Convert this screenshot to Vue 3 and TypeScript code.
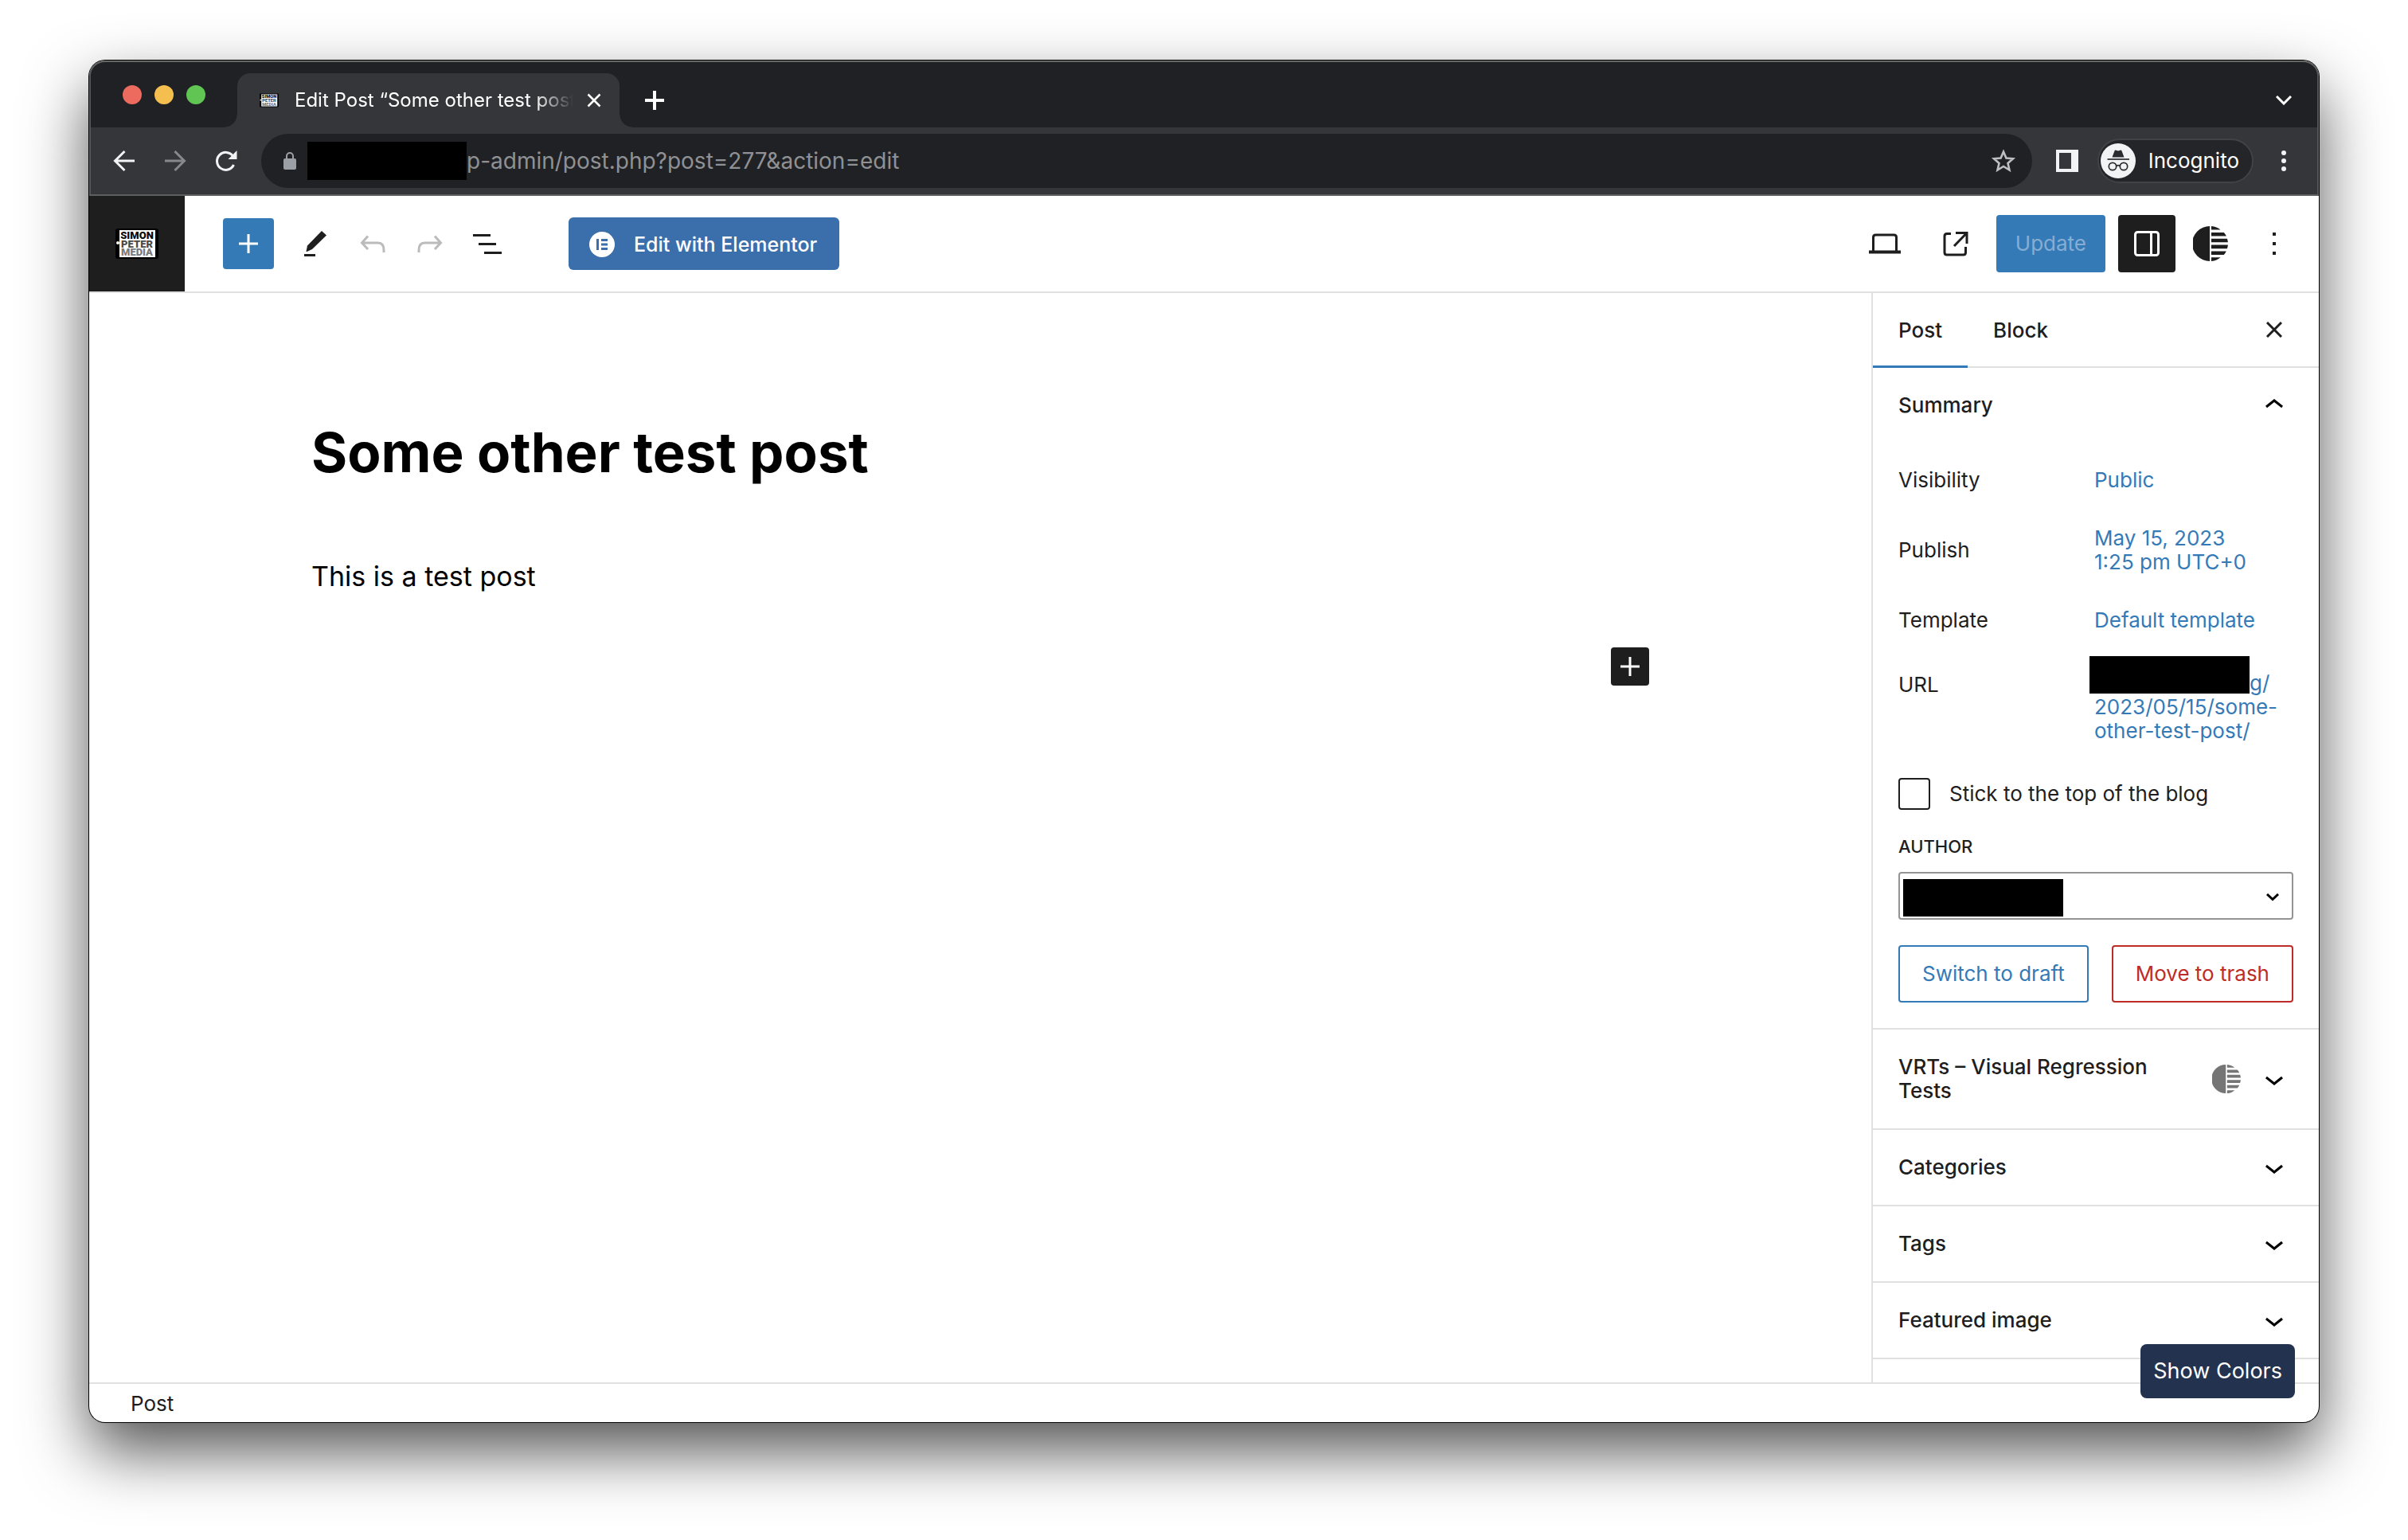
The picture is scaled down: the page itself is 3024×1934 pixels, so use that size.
<script setup lang="ts">
import { h, ref } from 'vue'

interface CollapsedPanel {
  title: string
  hasIcon: boolean
}

const address = ref('p-admin/post.php?post=277&action=edit')
const sticky = ref(false)
const author = ref('')

const panels: CollapsedPanel[] = [
  { title: 'VRTs – Visual Regression Tests', hasIcon: true },
  { title: 'Categories', hasIcon: false },
  { title: 'Tags', hasIcon: false },
  { title: 'Featured image', hasIcon: false },
]

const logoLines = [
  { text: 'SIMON', y: 13, fill: '#0a0a0a' },
  { text: 'PETER', y: 24, fill: '#4a4a4a' },
  { text: 'MEDIA', y: 34, fill: '#7a7a7a' },
]

// Site logo: a tablet with the three-line wordmark, used in the tab and in the header
const SiteLogo = (props: { width: number; height: number }) =>
  h('svg', { width: props.width, height: props.height, viewBox: '0 0 54 38' }, [
    h('rect', { width: 54, height: 38, rx: 3, fill: '#000' }),
    h('rect', { x: 5, y: 2, width: 45, height: 34, fill: '#fff' }),
    h('circle', { cx: 3, cy: 18, r: 2, fill: '#fff' }),
    ...logoLines.map((line) =>
      h(
        'text',
        {
          x: 27,
          y: line.y,
          fill: line.fill,
          'font-family': 'Roboto, sans-serif',
          'font-weight': 900,
          'font-size': 13,
          'text-anchor': 'middle',
        },
        line.text,
      ),
    ),
  ])
SiteLogo.props = ['width', 'height']
</script>

<template>
  <div class="desktop">
    <!-- Shared glyphs -->
    <svg class="defs" width="0" height="0" aria-hidden="true">
      <symbol id="vrts" viewBox="0 0 44 44">
        <path d="M21 0v44A22 22 0 0 1 21 0z" />
        <path d="M23 0q7 .5 11.500 4.600H23zM23 8h15.800q2 2 3 4.500H23zM23 15.700h19.900q.8 2.200 1 4.600H23zM23 23.600h20.900q-.2 2.400-1 4.600H23zM23 31.400h18.800q-1.200 2.500-3 4.600H23zM23 39.300h11.600Q30 43.500 23 44z" />
      </symbol>
      <symbol id="chevron-down" viewBox="0 0 24 24">
        <path d="M17.500 11.600L12 16l-5.500-4.400.9-1.200L12 14l4.500-3.600 1 1.200z" />
      </symbol>
    </svg>

    <div class="window">
      <header class="chrome">
        <div class="tabstrip">
          <div class="lights">
            <button class="light red" aria-label="Close window"></button>
            <button class="light yellow" aria-label="Minimize window"></button>
            <button class="light green" aria-label="Zoom window"></button>
          </div>
          <div class="tab">
            <SiteLogo :width="24" :height="18" />
            <span class="tab-title">Edit Post “Some other test post”</span>
            <button class="tab-close" aria-label="Close tab">
              <svg width="18" height="18" viewBox="0 0 18 18" fill="none" stroke="#fff" stroke-width="2.500"><path d="M1.500 1.500l15 15M16.500 1.500l-15 15" /></svg>
            </button>
          </div>
          <button class="strip-button" aria-label="New tab">
            <svg width="24" height="24" viewBox="0 0 24 24" fill="none" stroke="#fff" stroke-width="4"><path d="M12 0v24M0 12h24" /></svg>
          </button>
          <button class="strip-button tab-search" aria-label="Search tabs">
            <svg width="20" height="12" viewBox="0 0 20 12" fill="none" stroke="#fff" stroke-width="3"><path d="M1 1l9 9 9-9" /></svg>
          </button>
        </div>

        <div class="toolbar">
          <button class="nav" aria-label="Back">
            <svg width="28" height="28" viewBox="0 0 28 28" fill="none" stroke="#f1f3f4" stroke-width="3"><path d="M27 14H3M14.500 2L2.500 14l12 12" /></svg>
          </button>
          <button class="nav" aria-label="Forward">
            <svg width="28" height="28" viewBox="0 0 28 28" fill="none" stroke="#87888a" stroke-width="3"><path d="M1 14h24M13.500 2l12 12-12 12" /></svg>
          </button>
          <button class="nav" aria-label="Reload">
            <svg width="28" height="28" viewBox="0 0 28 28"><path d="M23.500 19a11 11 0 1 1-1-11" fill="none" stroke="#f1f3f4" stroke-width="3" /><path d="M27.500 1v11h-11z" fill="#f1f3f4" /></svg>
          </button>
          <div class="omnibox">
            <svg width="18" height="24" viewBox="0 0 18 24"><rect x="1" y="9" width="16" height="14" rx="2" fill="#9aa0a6" /><path d="M5 9V6a4 4 0 0 1 8 0v3" fill="none" stroke="#9aa0a6" stroke-width="2" /></svg>
            <span class="redaction"></span>
            <input v-model="address" class="address" type="text" aria-label="Address" />
            <button class="star" aria-label="Bookmark this tab">
              <svg width="32" height="32" viewBox="0 0 32 32" fill="none" stroke="#bdbfc1" stroke-width="2.600"><path d="M16 4.500l3.400 8 8.600.8-6.500 5.700 2 8.500-7.500-4.500-7.500 4.500 2-8.500L4 13.300l8.600-.8z" /></svg>
            </button>
          </div>
          <button class="nav side-panel" aria-label="Side panel">
            <svg width="28" height="28" viewBox="0 0 28 28"><path fill="#f1f3f4" fill-rule="evenodd" d="M0 0h28v28H0zM4 4v20h15V4z" /></svg>
          </button>
          <button class="profile">
            <svg width="44" height="44" viewBox="0 0 44 44">
              <circle cx="22" cy="22" r="22" fill="#f1f3f4" />
              <path d="M14.500 17.500l3-8q.5-1.500 2-.8l2.500.8 2.500-.8q1.500-.7 2 .8l3 8z" fill="#2b2c30" />
              <path d="M8.500 20h27.500" stroke="#2b2c30" stroke-width="1.700" />
              <g fill="none" stroke="#2b2c30" stroke-width="1.700"><circle cx="15" cy="29" r="4.700" /><circle cx="29" cy="29" r="4.700" /><path d="M19.500 28.500q2.500-1.600 5 0" /></g>
            </svg>
            <span>Incognito</span>
          </button>
          <button class="nav" aria-label="Browser menu">
            <svg width="8" height="28" viewBox="0 0 8 28" fill="#f1f3f4"><circle cx="4" cy="4" r="3" /><circle cx="4" cy="14" r="3" /><circle cx="4" cy="24" r="3" /></svg>
          </button>
        </div>
      </header>

      <div class="editor-header">
        <a class="site" href="#" aria-label="View Posts">
          <SiteLogo :width="54" :height="38" />
        </a>
        <div class="tools">
          <button class="inserter" aria-label="Toggle block inserter">
            <svg width="24" height="24" viewBox="0 0 24 24" fill="none" stroke="#fff" stroke-width="3"><path d="M12 0v24M0 12h24" /></svg>
          </button>
          <button class="tool" aria-label="Tools">
            <svg width="48" height="48" viewBox="0 0 48 48" fill="#1e1e1e"><path d="M32 8l6 5.500L20 31l-6.500 3h-1l1.500-7.500z" /><path d="M10 37h14v3H10z" /></svg>
          </button>
          <button class="tool" aria-label="Undo">
            <svg width="48" height="48" viewBox="0 0 48 48" fill="none" stroke="#bbb" stroke-width="3"><path d="M18 14.500L10.500 23l7.500 8M10.500 23H31q7 0 7 9v3" /></svg>
          </button>
          <button class="tool" aria-label="Redo">
            <svg width="48" height="48" viewBox="0 0 48 48" fill="none" stroke="#bbb" stroke-width="3"><path d="M30 14.500l7.500 8.500-7.500 8M37.500 23H17q-7 0-7 9v3" /></svg>
          </button>
          <button class="tool" aria-label="Document overview">
            <svg width="48" height="48" viewBox="0 0 48 48" fill="#1e1e1e"><path d="M6 12h22v3H6zM13 23h22v3H13zM20 34h22v3H20z" /></svg>
          </button>
        </div>
        <button class="elementor">
          <svg width="32" height="32" viewBox="0 0 32 32"><circle cx="16" cy="16" r="16" fill="#fff" /><path d="M9 9h3v14H9zM15 9h8v3h-8zM15 14.500h8v3h-8zM15 20h8v3h-8z" fill="#3b6fab" /></svg>
          <span>Edit with Elementor</span>
        </button>
        <div class="actions">
          <button class="tool" aria-label="Preview">
            <svg width="40" height="40" viewBox="0 0 40 40" fill="none" stroke="#1e1e1e" stroke-width="3"><path d="M5.500 30V12q0-3 3-3h23q3 0 3 3v18" /><path d="M0 30.500h40" stroke-width="4" /></svg>
          </button>
          <button class="tool" aria-label="View Post">
            <svg width="48" height="48" viewBox="0 0 48 48" fill="none" stroke="#1e1e1e" stroke-width="3"><path d="M19 11.500h-5q-3 0-3 3V35q0 3 3 3h20.500q3 0 3-3v-7" /><path d="M25 10.500h14V24M39 10.500L23 27" /></svg>
          </button>
          <button class="update" disabled>Update</button>
          <button class="tool settings" aria-label="Settings">
            <svg width="32" height="32" viewBox="0 0 32 32" fill="none" stroke="#fff" stroke-width="3"><rect x="1.500" y="1.500" width="29" height="29" rx="3" /><path d="M21.500 1v30" /></svg>
          </button>
          <button class="tool" aria-label="VRTs">
            <svg width="44" height="44" fill="#1e1e1e"><use href="#vrts" /></svg>
          </button>
          <button class="tool" aria-label="Options">
            <svg width="4" height="28" viewBox="0 0 4 28" fill="#1e1e1e"><path d="M0 0h4v4H0zM0 12h4v4H0zM0 24h4v4H0z" /></svg>
          </button>
        </div>
      </div>

      <div class="editor-body">
        <main class="canvas">
          <article class="post">
            <h1>Some other test post</h1>
            <p>This is a test post</p>
            <button class="appender" aria-label="Add block">
              <svg width="24" height="24" viewBox="0 0 24 24" fill="none" stroke="#fff" stroke-width="3"><path d="M12 0v24M0 12h24" /></svg>
            </button>
          </article>
        </main>

        <aside class="sidebar">
          <div class="sidebar-tabs">
            <button class="side-tab active">Post</button>
            <button class="side-tab">Block</button>
            <button class="tool close-sidebar" aria-label="Close Settings">
              <svg width="20" height="20" viewBox="0 0 20 20" fill="none" stroke="#1e1e1e" stroke-width="3"><path d="M1 1l18 18M19 1L1 19" /></svg>
            </button>
          </div>

          <section class="summary">
            <button class="panel-title">
              <span>Summary</span>
              <svg width="48" height="48" viewBox="0 0 24 24"><path d="M6.500 12.400L12 8l5.500 4.400-.9 1.200L12 10l-4.500 3.600-1-1.200z" /></svg>
            </button>
            <div class="rows">
              <div class="row"><span>Visibility</span><a href="#">Public</a></div>
              <div class="row"><span>Publish</span><a href="#">May 15, 2023<br />1:25 pm UTC+0</a></div>
              <div class="row"><span>Template</span><a href="#">Default template</a></div>
              <div class="row url">
                <span>URL</span>
                <a href="#"><i class="redaction"></i>g/<br />2023/05/15/some-<br />other-test-post/</a>
              </div>
            </div>
            <label class="sticky"><input v-model="sticky" type="checkbox" />Stick to the top of the blog</label>
            <label class="author-label" for="author">Author</label>
            <div class="author">
              <select id="author" v-model="author"><option value=""></option></select>
              <i class="redaction"></i>
              <svg width="16" height="10" viewBox="0 0 16 10" fill="none" stroke="#000" stroke-width="3"><path d="M1 1l7 6.500L15 1" /></svg>
            </div>
            <div class="buttons">
              <button class="draft">Switch to draft</button>
              <button class="trash">Move to trash</button>
            </div>
          </section>

          <button v-for="panel in panels" :key="panel.title" class="panel-title collapsed">
            <span>{{ panel.title }}</span>
            <svg v-if="panel.hasIcon" class="panel-icon" width="36" height="36" fill="#757575"><use href="#vrts" /></svg>
            <svg width="48" height="48"><use href="#chevron-down" /></svg>
          </button>
          <div class="panel-rest"></div>
        </aside>
      </div>

      <footer class="breadcrumb"><a href="#">Post</a></footer>

      <button class="show-colors">Show Colors</button>
    </div>
  </div>
</template>

<style>
body {
  background: #fff;
}
</style>

<style scoped>
* {
  box-sizing: border-box;
}

.desktop {
  display: flex;
  min-height: 100vh;
  padding: 76px 112px 148px;
  font-family: Inter, 'Liberation Sans', sans-serif;
  font-size: 26px;
  line-height: 30px;
  color: #1e1e1e;
}

.defs {
  position: absolute;
}

button {
  display: flex;
  align-items: center;
  justify-content: center;
  padding: 0;
  border: 0;
  background: none;
  color: inherit;
  font: inherit;
}

a {
  color: #347ab7;
  text-decoration: none;
}

svg {
  flex: none;
}

.redaction {
  flex: none;
  background: #000;
}

.window {
  position: relative;
  display: flex;
  flex: 1;
  flex-direction: column;
  min-width: 0;
  border-radius: 20px;
  background: #fff;
  box-shadow: 0 0 0 1px #000, 0 36px 80px rgba(0, 0, 0, 0.68);
}

/* Browser chrome */
.chrome {
  border-bottom: 2px solid #5e5f63;
  border-radius: 20px 20px 0 0;
  background: #35363a;
  box-shadow: inset 0 2px #666866, inset 2px 0 #55565a, inset -2px 0 #55565a;
}

.tabstrip {
  display: flex;
  align-items: flex-end;
  height: 84px;
  margin: 0 2px;
  padding: 0 10px 0 40px;
  border-top: 2px solid #666866;
  border-radius: 18px 18px 0 0;
  background: #202124;
}

.lights {
  display: flex;
  gap: 16px;
  align-self: center;
  margin-right: 40px;
}

.light {
  width: 24px;
  height: 24px;
  border-radius: 50%;
}

.red {
  background: #ed6a5e;
}

.yellow {
  background: #f5bf4f;
}

.green {
  background: #61c554;
}

.tab {
  position: relative;
  display: flex;
  align-items: center;
  width: 480px;
  height: 68px;
  padding: 0 14px 0 28px;
  border-radius: 16px 16px 0 0;
  background: #35363a;
  color: #fff;
}

.tab::before,
.tab::after {
  position: absolute;
  bottom: 0;
  width: 16px;
  height: 16px;
  content: '';
}

.tab::before {
  right: 100%;
  background: radial-gradient(circle at 0 0, #202124 15px, #35363a 16px);
}

.tab::after {
  left: 100%;
  background: radial-gradient(circle at 100% 0, #202124 15px, #35363a 16px);
}

.tab-title {
  flex: 1;
  margin-left: 20px;
  overflow: hidden;
  font-size: 24px;
  white-space: nowrap;
  mask-image: linear-gradient(to right, #000 86%, transparent);
}

.tab-close {
  width: 36px;
  height: 36px;
  margin-left: 8px;
}

.strip-button {
  width: 64px;
  height: 68px;
  margin-left: 12px;
}

.tab-search {
  margin-left: auto;
}

.toolbar {
  display: flex;
  align-items: center;
  height: 84px;
  padding: 0 12px;
}

.nav {
  width: 64px;
  height: 64px;
}

.omnibox {
  display: flex;
  flex: 1;
  align-items: center;
  height: 68px;
  margin: 0 12px;
  padding: 0 16px 0 27px;
  border-radius: 34px;
  background: #202124;
}

.omnibox .redaction {
  width: 200px;
  height: 48px;
  margin-left: 13px;
}

.address {
  flex: 1;
  min-width: 0;
  padding: 0;
  border: 0;
  outline: 0;
  background: none;
  color: #8f9194;
  font: inherit;
  font-size: 28px;
}

.star {
  width: 40px;
  height: 40px;
}

.profile {
  gap: 16px;
  height: 56px;
  margin: 0 6px;
  padding: 0 16px 0 2px;
  border: 2px solid #414246;
  border-radius: 28px;
  background: #242529;
  color: #fff;
}

/* Editor header */
.editor-header {
  display: flex;
  align-items: center;
  height: 122px;
  border-bottom: 2px solid #e0e0e0;
}

.site {
  display: flex;
  align-items: center;
  justify-content: center;
  align-self: stretch;
  width: 120px;
  background: #1e1e1e;
}

.tools {
  display: flex;
  align-items: center;
  margin-left: 48px;
}

.inserter {
  width: 64px;
  height: 64px;
  margin-right: 16px;
  border-radius: 4px;
  background: #347ab7;
}

.tool {
  width: 72px;
  height: 72px;
}

.elementor {
  gap: 24px;
  height: 66px;
  margin-left: 66px;
  padding: 2px 28px 0 26px;
  border-radius: 6px;
  background: #3b6fab;
  color: #fff;
  font-size: 25px;
  font-weight: 500;
}

.actions {
  display: flex;
  gap: 8px;
  margin-left: auto;
  padding-right: 20px;
}

.actions .tool:nth-child(-n + 2) {
  margin-right: 8px;
}

.update {
  height: 72px;
  margin-right: 8px;
  padding: 0 24px;
  border-radius: 4px;
  background: #347ab7;
  color: #86add3;
}

.settings {
  border-radius: 4px;
  background: #1e1e1e;
}

/* Canvas */
.editor-body {
  display: flex;
  flex: 1;
}

.canvas {
  flex: 1;
  padding: 158px 24px 0;
}

.post {
  display: flex;
  flex-direction: column;
  max-width: 1680px;
  margin: 0 auto;
  color: #000;
}

h1 {
  margin: 0;
  font-size: 69px;
  font-weight: 700;
  line-height: 84px;
}

p {
  margin: 87px 0 62px;
  font-size: 34px;
  line-height: 54px;
}

.appender {
  align-self: flex-end;
  width: 48px;
  height: 48px;
  border-radius: 4px;
  background: #1e1e1e;
}

/* Sidebar */
.sidebar {
  display: flex;
  flex-direction: column;
  width: 562px;
  border-left: 2px solid #e0e0e0;
}

.sidebar-tabs {
  display: flex;
  height: 94px;
  border-bottom: 2px solid #e0e0e0;
}

.side-tab {
  height: 94px;
  padding: 0 32px;
  font-weight: 500;
}

.active {
  box-shadow: inset 0 -3px #347ab7;
}

.close-sidebar {
  align-self: center;
  margin: 0 20px 0 auto;
}

.panel-title {
  width: 100%;
  min-height: 93px;
  padding: 0 32px;
  font-weight: 500;
  text-align: left;
}

.panel-title span {
  flex: 1;
}

.summary {
  padding-bottom: 32px;
}

.rows {
  display: flex;
  flex-direction: column;
  gap: 16px;
  padding: 12px 32px 0;
}

.row {
  display: flex;
  align-items: center;
}

.row span {
  width: 234px;
}

.row a {
  padding: 21px 12px;
}

.row a:has(br) {
  padding: 6px 12px;
}

.row.url {
  align-items: flex-start;
}

.row.url span {
  padding-top: 14px;
}

.row.url a {
  padding: 12px;
}

.url .redaction {
  display: inline-block;
  width: 201px;
  height: 47px;
  margin: -24px 0 -6px -6px;
  vertical-align: 2px;
}

.sticky {
  display: flex;
  align-items: center;
  gap: 24px;
  margin: 32px 32px 0;
}

.sticky input {
  width: 40px;
  height: 40px;
  margin: 0;
  border: 2px solid #1e1e1e;
  border-radius: 4px;
  appearance: none;
}

.author-label {
  display: block;
  margin: 32px 32px 18px;
  font-size: 22px;
  font-weight: 500;
  line-height: 28px;
  text-transform: uppercase;
}

.author {
  position: relative;
  margin: 0 32px;
}

.author select {
  display: block;
  width: 100%;
  height: 60px;
  border: 2px solid #949494;
  border-radius: 4px;
  background: #fff;
  font: inherit;
  appearance: none;
}

.author .redaction {
  position: absolute;
  top: 9px;
  left: 6px;
  width: 201px;
  height: 47px;
}

.author svg {
  position: absolute;
  top: 27px;
  right: 18px;
}

.buttons {
  display: flex;
  justify-content: space-between;
  margin: 32px 32px 0;
}

.buttons button {
  height: 72px;
  padding: 0 28px;
  border: 2px solid;
  border-radius: 4px;
}

.draft {
  color: #347ab7;
}

.trash {
  color: #bd2d28;
}

.collapsed {
  min-height: 96px;
  padding-block: 18px;
  border-top: 2px solid #e0e0e0;
}

.collapsed:has(.panel-icon) {
  min-height: 126px;
}

.panel-icon {
  margin: 0 18px 0 60px;
}

.panel-rest {
  flex: 1;
  border-top: 2px solid #e0e0e0;
}

.breadcrumb {
  height: 50px;
  padding: 10px 52px;
  border-top: 2px solid #e0e0e0;
}

.breadcrumb a {
  color: #1e1e1e;
}

.show-colors {
  position: absolute;
  right: 30px;
  bottom: 30px;
  height: 68px;
  padding: 0 16px;
  border-radius: 8px;
  background: #23324f;
  color: #fff;
  font-size: 27px;
}
</style>
